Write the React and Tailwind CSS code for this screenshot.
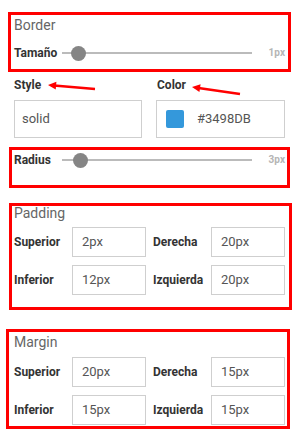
import React from "react";

const font = { fontFamily: "Roboto, 'Open Sans', sans-serif" };

function Slider({ label, pos, value }) {
  return (
    <div className="flex items-center h-[16px]">
      <span className="w-[48px] text-[12px] font-bold text-[#333] leading-[16px]">{label}</span>
      <div className="relative w-[190px] h-[16px] flex items-center">
        <div className="w-full h-[2px] bg-[#bbb]" />
        <div
          className="absolute w-[15px] h-[15px] rounded-full bg-[#858585] top-[0.5px]"
          style={{ left: pos }}
        />
      </div>
      <span className="ml-auto text-[10px] font-bold text-[#b5b5b5] leading-[16px]">{value}</span>
    </div>
  );
}

function Field({ value }) {
  return (
    <div className="w-[74px] h-[30px] border border-[#cfcfcf] flex items-center pl-[9px] text-[13px] text-[#555]">
      {value}
    </div>
  );
}

function Row({ a, av, b, bv }) {
  return (
    <div className="flex items-center">
      <span className="w-[58px] text-[12px] font-bold text-[#333]">{a}</span>
      <Field value={av} />
      <span className="ml-[7px] w-[58px] text-[12px] font-bold text-[#333]">{b}</span>
      <Field value={bv} />
    </div>
  );
}

function Arrow({ x1, y1, x2, y2 }) {
  const ang = Math.atan2(y1 - y2, x1 - x2);
  const len = 9;
  const p1 = [x2 + len * Math.cos(ang + 0.45), y2 + len * Math.sin(ang + 0.45)];
  const p2 = [x2 + len * Math.cos(ang - 0.45), y2 + len * Math.sin(ang - 0.45)];
  return (
    <g>
      <line x1={x1} y1={y1} x2={x2 + 3 * Math.cos(ang)} y2={y2 + 3 * Math.sin(ang)} stroke="#f00" strokeWidth="2.5" />
      <polygon points={`${x2},${y2} ${p1[0]},${p1[1]} ${p2[0]},${p2[1]}`} fill="#f00" />
    </g>
  );
}

export default function App() {
  return (
    <div className="relative w-[295px] h-[435px] bg-white overflow-hidden" style={font}>
      {/* Border */}
      <div className="mt-[12px] ml-[8px] w-[283px] h-[60px] border-[3px] border-[#f00] pl-[3px] pr-[3px]">
        <div className="text-[14px] leading-[20px] text-[#666]">Border</div>
        <div className="mt-[10px]">
          <Slider label="Tamaño" pos={9} value="1px" />
        </div>
      </div>

      {/* Style / Color */}
      <div className="flex mt-[5px] pl-[14px]">
        <div className="w-[142px] shrink-0">
          <div className="text-[12px] font-bold text-[#333] leading-[16px]">Style</div>
          <div className="mt-[7px] w-[128px] h-[38px] border border-[#cfcfcf] flex items-center pl-[7px] text-[13px] text-[#555]">
            solid
          </div>
        </div>
        <div className="shrink-0">
          <div className="pl-[1px] text-[12px] font-bold text-[#333] leading-[16px]">Color</div>
          <div className="mt-[7px] w-[129px] h-[38px] border border-[#cfcfcf] flex items-center pl-[9px] text-[13px] text-[#555]">
            <span className="w-[18px] h-[18px] rounded-[2px] bg-[#3498DB]" />
            <span className="ml-[13px]">#3498DB</span>
          </div>
        </div>
      </div>

      {/* Radius */}
      <div className="mt-[9px] ml-[9px] w-[281px] h-[41px] border-[3px] border-[#f00] pl-[2px] pr-[2px] pt-[2px]">
        <Slider label="Radius" pos={11} value="3px" />
      </div>

      {/* Padding */}
      <div className="mt-[15px] ml-[9px] w-[283px] h-[107px] border-[3px] border-[#f00] pl-[2px]">
        <div className="text-[14px] leading-[14px] text-[#666]">Padding</div>
        <div className="mt-[7px] flex flex-col gap-[8px]">
          <Row a="Superior" av="2px" b="Derecha" bv="20px" />
          <Row a="Inferior" av="12px" b="Izquierda" bv="20px" />
        </div>
      </div>

      {/* Margin */}
      <div className="mt-[19px] ml-[6px] w-[284px] h-[100px] border-[3px] border-[#f00] pl-[5px]">
        <div className="text-[14px] leading-[20px] text-[#666]">Margin</div>
        <div className="mt-[5px] flex flex-col gap-[8px]">
          <Row a="Superior" av="20px" b="Derecha" bv="15px" />
          <Row a="Inferior" av="15px" b="Izquierda" bv="15px" />
        </div>
      </div>

      <svg className="absolute left-0 top-0 pointer-events-none" width="295" height="435">
        <Arrow x1={95} y1={89} x2={48} y2={85} />
        <Arrow x1={240} y1={94} x2={192} y2={87} />
      </svg>
    </div>
  );
}
